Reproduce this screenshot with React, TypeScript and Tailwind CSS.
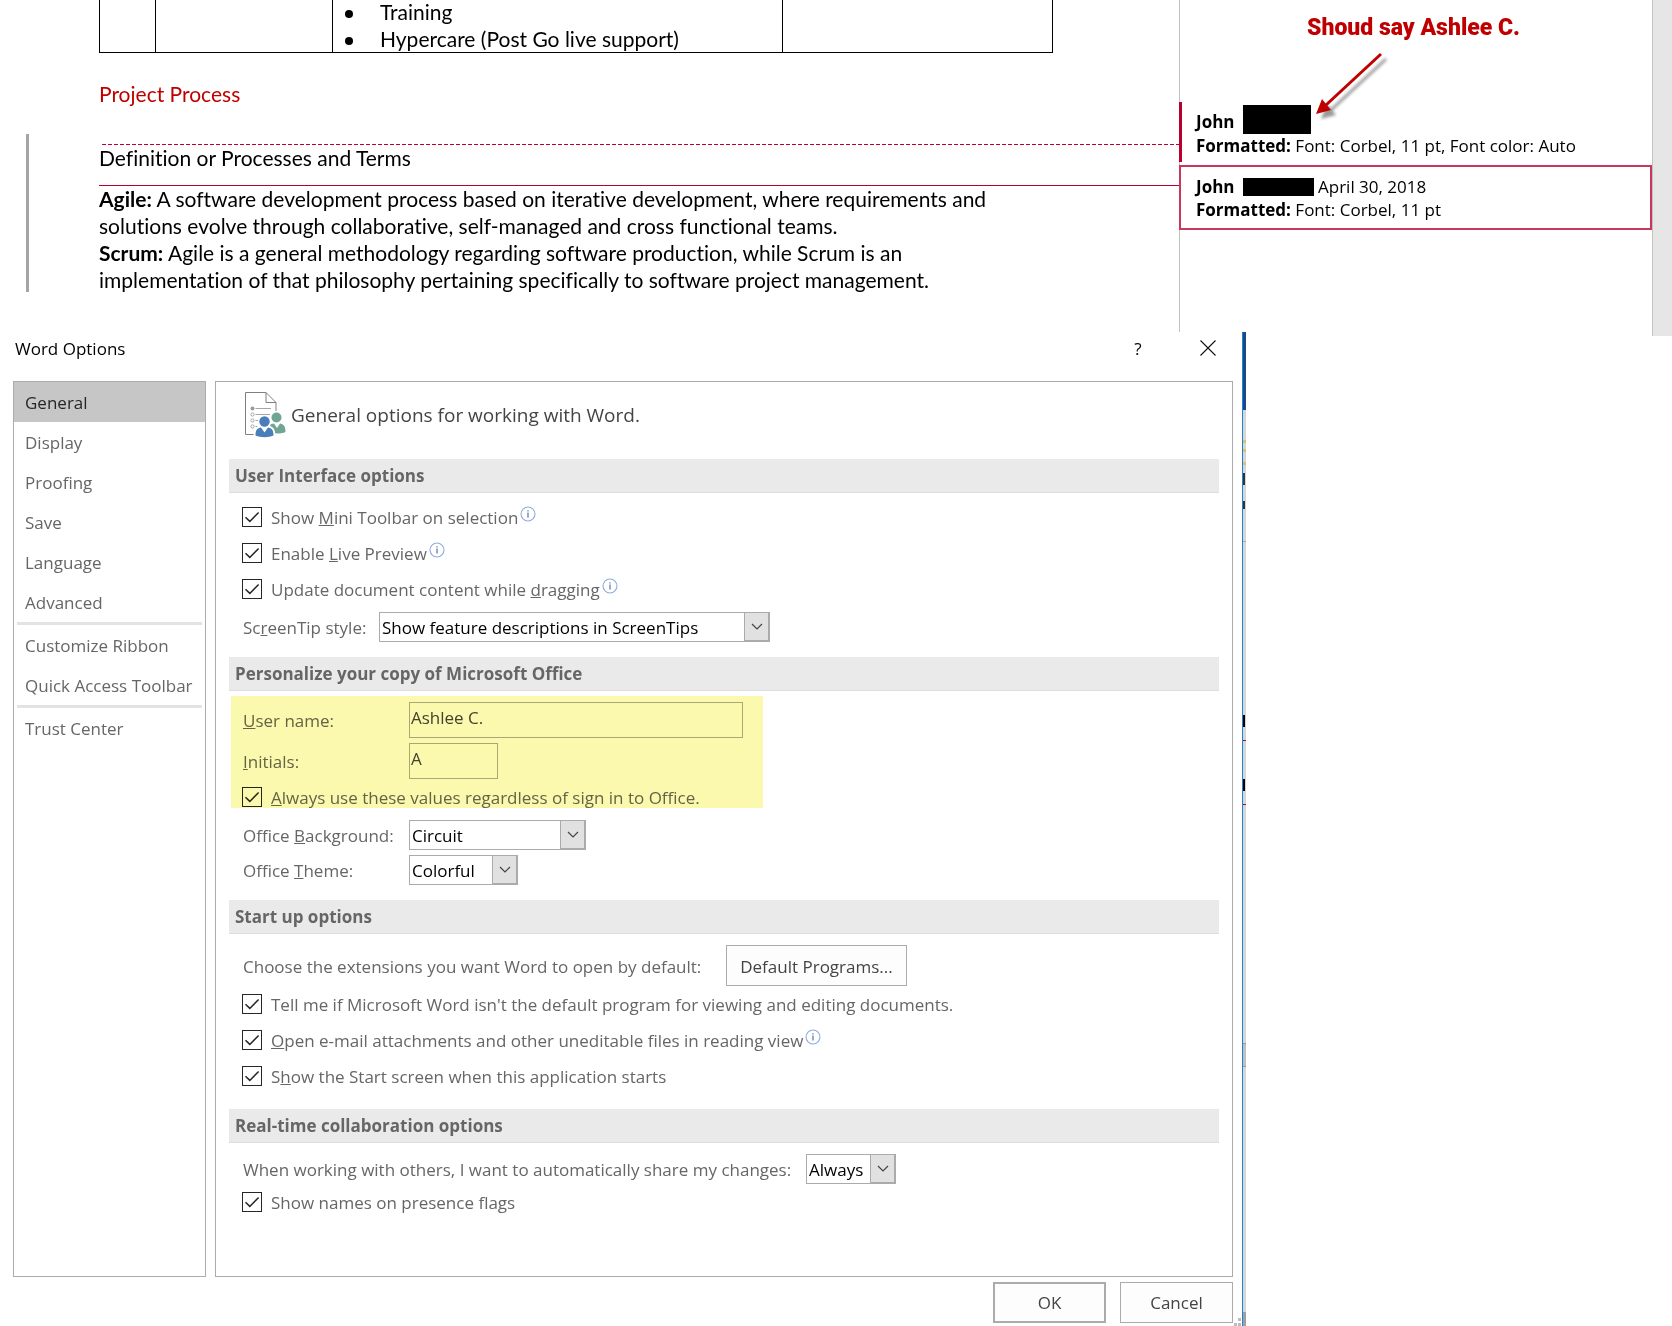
import React, { useState } from "react";

interface CheckRowProps {
  id: string;
  children: React.ReactNode;
  info?: boolean;
}

interface DropdownProps {
  id: string;
  options: string[];
  className: string;
}

interface NavItem {
  label: string;
  divider?: boolean;
}

const NAV_ITEMS: NavItem[] = [
  { label: "General" },
  { label: "Display" },
  { label: "Proofing" },
  { label: "Save" },
  { label: "Language" },
  { label: "Advanced" },
  { label: "Customize Ribbon", divider: true },
  { label: "Quick Access Toolbar" },
  { label: "Trust Center", divider: true },
];

const TABLE_ITEMS = ["Training", "Hypercare (Post Go live support)"];

function InfoIcon() {
  return (
    <svg className="mb-1.5 ml-0.5 h-4 w-4 shrink-0" viewBox="0 0 16 16" fill="none" aria-hidden="true">
      <circle cx="8" cy="8" r="7" stroke="#8faadc" strokeWidth="1.1" />
      <path d="M8 6.6V11.4" stroke="#5b6fa8" strokeWidth="1.2" />
      <path d="M8 4.2V5.5" stroke="#5b6fa8" strokeWidth="1.2" />
    </svg>
  );
}

function CheckRow({ id, children, info }: CheckRowProps) {
  return (
    <div className="flex h-9 items-center pl-[13px]">
      <span className="relative h-5 w-5 shrink-0">
        <input
          id={id}
          type="checkbox"
          defaultChecked
          className="peer block h-5 w-5 appearance-none border border-[#262626] bg-white"
        />
        <svg
          className="pointer-events-none absolute inset-0 hidden h-5 w-5 peer-checked:block"
          viewBox="0 0 20 20"
          fill="none"
          aria-hidden="true"
        >
          <path d="M3.5 10.2L7.8 14.4L16.6 5.4" stroke="#262626" strokeWidth="1.5" />
        </svg>
      </span>
      <label htmlFor={id} className="pt-0.5 pl-[9px] whitespace-nowrap">
        {children}
      </label>
      {info && <InfoIcon />}
    </div>
  );
}

function Dropdown({ id, options, className }: DropdownProps) {
  return (
    <span className={"relative inline-block h-[30px] " + className}>
      <select
        id={id}
        className="h-full w-full appearance-none border border-[#ababab] bg-white pt-0.5 pr-[26px] pl-0.5 text-black"
      >
        {options.map((o) => (
          <option key={o}>{o}</option>
        ))}
      </select>
      <span className="pointer-events-none absolute inset-y-0 right-0 flex w-[26px] items-center justify-center border border-r-2 border-b-2 border-[#ababab] bg-[#e1e1e1]">
        <svg className="h-[7px] w-3" viewBox="0 0 12 7" fill="none" aria-hidden="true">
          <path d="M1 1L6 6L11 1" stroke="#444444" strokeWidth="1.2" />
        </svg>
      </span>
    </span>
  );
}

function SectionTitle({ children }: { children: React.ReactNode }) {
  return (
    <h2 className="flex h-[34px] items-center border-b border-[#dedede] bg-[#eaeaea] pl-1.5 font-bold text-[#666666]">
      {children}
    </h2>
  );
}

function GeneralIcon() {
  return (
    <svg className="h-[46px] w-[41px]" viewBox="0 0 41 46" fill="none" aria-hidden="true">
      <path d="M10 42.5H0.5V0.5H21L31 10.5V19" stroke="#7f7f7f" />
      <path d="M21 0.5V10.5H31" stroke="#7f7f7f" />
      <circle cx="7.5" cy="16.5" r="2" fill="#9a9a9a" />
      <circle cx="7.5" cy="22.5" r="1.6" stroke="#a6a6a6" />
      <circle cx="7.5" cy="28.5" r="1.6" stroke="#a6a6a6" />
      <circle cx="7.5" cy="34.5" r="1.6" stroke="#a6a6a6" />
      <path d="M10.5 16.5H26M10.5 22.5H25M10.5 28.5H13M10.5 34.5H12.5" stroke="#a6a6a6" />
      <circle cx="31.5" cy="25.5" r="5" fill="#70a593" />
      <path d="M25 33C27 31.6 29 31.6 29 31.6L32 36L35 31.6C38.5 32.4 40.5 34 40.5 40C37 41.8 31 41.8 27.5 40.8Z" fill="#70a593" />
      <circle cx="19.5" cy="29.5" r="6.2" fill="#ffffff" />
      <circle cx="19.5" cy="29.5" r="5.2" fill="#4a7ebb" />
      <path
        d="M9.5 44C9.5 37 12.5 34.8 16 34.8L19.5 40L23 34.8C26.5 34.8 29.5 37 29.5 44C24 46.5 15 46.5 9.5 44Z"
        fill="#ffffff"
        stroke="#ffffff"
        strokeWidth="2"
      />
      <path
        d="M10.5 43.5C10.5 38 12.5 36 16 35.6L19.5 40.5L23 35.6C26.5 36 28.5 38 28.5 43.5C23.5 45.8 15.5 45.8 10.5 43.5Z"
        fill="#4a7ebb"
      />
    </svg>
  );
}

function DocumentPage() {
  return (
    <main className="min-w-0 flex-1 font-['Lato',sans-serif] text-[21px] leading-[27px] text-black [font-variant-ligatures:none]">
      <table className="-mt-0.5 ml-[99px] w-[954px] table-fixed border-collapse">
        <tbody>
          <tr>
            <td className="w-14 border border-t-0 border-black" />
            <td className="w-[177px] border border-t-0 border-black" />
            <td className="w-[450px] border border-t-0 border-black p-0">
              <ul className="pl-3">
                {TABLE_ITEMS.map((item) => (
                  <li key={item} className="flex items-center gap-[27px]">
                    <span className="mt-1 h-2 w-2 rounded-full bg-black" />
                    {item}
                  </li>
                ))}
              </ul>
            </td>
            <td className="border border-t-0 border-black" />
          </tr>
        </tbody>
      </table>

      <h1 className="mt-[27px] ml-[99px] text-[#c00000]">Project Process</h1>

      {/* Revised block, flagged by the change bar in the margin */}
      <div className="mt-[27px] ml-[26px] h-[158px] border-l-[3px] border-[#a5a5a5] pt-2.5">
        <div className="ml-[73px] h-px bg-[repeating-linear-gradient(90deg,#c00030_0_4px,transparent_4px_6px)]" />
        <p className="-mt-px ml-[70px]">Definition or Processes and Terms</p>
        <div className="mt-3.5 ml-[70px] h-px bg-[#b8002e]" />
        <p className="-mt-px ml-[70px]">
          <b>Agile:</b> A software development process based on iterative development, where requirements and
          <br />
          solutions evolve through collaborative, self-managed and cross functional teams.
          <br />
          <b>Scrum:</b> Agile is a general methodology regarding software production, while Scrum is an
          <br />
          implementation of that philosophy pertaining specifically to software project management.
        </p>
      </div>
    </main>
  );
}

function Comments() {
  return (
    <aside className="relative w-[473px] border-l border-[#c3c3c3] text-[17px] leading-6 text-black">
      <p className="pt-4 pl-[127px] font-['Roboto',sans-serif] text-[23px] font-black text-[#c00000]">
        Shoud say Ashlee C.
      </p>
      <svg
        className="absolute top-[50px] left-[130px] h-[74px] w-[84px]"
        viewBox="0 0 84 74"
        fill="none"
        aria-hidden="true"
      >
        <defs>
          <filter id="soft" x="-20%" y="-20%" width="140%" height="140%">
            <feGaussianBlur stdDeviation="1.5" />
          </filter>
        </defs>
        <g filter="url(#soft)" transform="translate(5 5)" opacity="0.4">
          <path d="M71 4L16 55" stroke="#000000" strokeWidth="3" />
          <path d="M6 64L12 49L21 60Z" fill="#000000" />
        </g>
        <path d="M71 4L16 55" stroke="#c00000" strokeWidth="3" />
        <path d="M6 64L12 49L21 60Z" fill="#c00000" />
      </svg>

      <div className="mt-[62px] -ml-px h-[60px] border-l-[3px] border-[#b8002e] pt-[3px] pl-3.5">
        <div className="flex h-[29px] items-center">
          <b className="w-[47px] pt-1">John</b>
          <span className="h-[29px] w-[68px] bg-black" />
        </div>
        <p>
          <b>Formatted:</b> Font: Corbel, 11 pt, Font color: Auto
        </p>
      </div>
      <div className="mt-[3px] -ml-px h-[65px] border-2 border-[#c8385c] pt-2 pl-[15px]">
        <div className="flex h-[23px] items-center">
          <b className="w-[47px]">John</b>
          <span className="mr-1 h-[18px] w-[71px] bg-black" />
          April 30, 2018
        </div>
        <p>
          <b>Formatted:</b> Font: Corbel, 11 pt
        </p>
      </div>
    </aside>
  );
}

// The sliver of the Word window that shows behind the dialog's right edge
function WindowEdge() {
  return (
    <div className="flex w-1 flex-col overflow-hidden border-l border-[#1a85d6] bg-[#d6d6d6]" aria-hidden="true">
      <div className="h-[78px] bg-[#194a86]" />
      <div className="mt-[30px] h-[3px] bg-[#e3bd6a]" />
      <div className="mt-1.5 h-[3px] bg-[#e3bd6a]" />
      <div className="mt-2.5 h-[3px] bg-[#e3bd6a]" />
      <div className="mt-2 h-3 w-0.5 bg-[#333333]" />
      <div className="mt-4 h-2 w-0.5 bg-[#333333]" />
      <div className="mt-8 h-px bg-[#aaaaaa]" />
      <div className="mt-[173px] h-3 w-0.5 bg-black" />
      <div className="mt-[13px] h-px bg-[#b8002e]" />
      <div className="mt-[38px] h-3 w-0.5 bg-black" />
      <div className="mt-[13px] h-px bg-[#b8002e]" />
      <div className="mt-[238px] h-6 border-y border-[#9a9a9a] bg-[#c0c0c0]" />
      <div className="mt-auto h-3.5 bg-[#a0a0a0]" />
    </div>
  );
}

function OptionsDialog() {
  const [active, setActive] = useState("General");

  return (
    <div role="dialog" aria-label="Word Options" className="flex w-full max-w-[1246px] flex-1">
      <div className="relative flex min-w-0 flex-1 flex-col pr-[9px] pb-[3px] pl-[13px]">
        <header className="flex h-[49px] items-start pt-1 text-black">
          <h1 className="pl-0.5 leading-[26px]">Word Options</h1>
          <button type="button" aria-label="Help" className="ml-auto w-4 leading-[26px]">
            ?
          </button>
          <button type="button" aria-label="Close" className="mt-1 mr-[17px] ml-[54px]">
            <svg className="h-4 w-4" viewBox="0 0 16 16" fill="none" aria-hidden="true">
              <path d="M0.5 0.5L15.5 15.5M15.5 0.5L0.5 15.5" stroke="#111111" strokeWidth="1.1" />
            </svg>
          </button>
        </header>

        <div className="flex flex-1 gap-[9px]">
          <nav className="flex w-[193px] flex-col border border-[#ababab]">
            {NAV_ITEMS.map(({ label, divider }) => (
              <React.Fragment key={label}>
                {divider && <div className="mx-[3px] h-[3px] shrink-0 bg-[#e3e3e3]" />}
                <button
                  type="button"
                  onClick={() => setActive(label)}
                  className={
                    active === label
                      ? "h-10 bg-[#c6c6c6] pt-0.5 pl-[11px] text-left whitespace-nowrap text-[#262626]"
                      : "h-10 pt-0.5 pl-[11px] text-left whitespace-nowrap"
                  }
                >
                  {label}
                </button>
              </React.Fragment>
            ))}
          </nav>

          <section className="min-w-0 flex-1 border border-[#ababab] pr-[13px] pl-[13px]">
            <div className="flex h-[77px] items-start gap-[5px] pt-2.5 pl-4 text-[19px] text-[#444444]">
              <GeneralIcon />
              <p className="pt-[9px]">General options for working with Word.</p>
            </div>

            <SectionTitle>User Interface options</SectionTitle>
            <div className="pt-1.5 pb-2.5">
              <CheckRow id="mini-toolbar" info>
                Show <u>M</u>ini Toolbar on selection
              </CheckRow>
              <CheckRow id="live-preview" info>
                Enable <u>L</u>ive Preview
              </CheckRow>
              <CheckRow id="update-drag" info>
                Update document content while <u>d</u>ragging
              </CheckRow>
              <div className="flex h-10 items-center pl-3.5">
                <label htmlFor="screentip" className="w-[136px] pt-0.5">
                  Sc<u>r</u>eenTip style:
                </label>
                <Dropdown
                  id="screentip"
                  className="w-[391px]"
                  options={[
                    "Show feature descriptions in ScreenTips",
                    "Don't show feature descriptions in ScreenTips",
                    "Don't show ScreenTips",
                  ]}
                />
              </div>
            </div>

            <SectionTitle>Personalize your copy of Microsoft Office</SectionTitle>
            <div className="relative pt-[11px] pb-[15px]">
              <div className="flex h-9 items-center pl-3.5">
                <label htmlFor="user-name" className="w-[166px] pt-0.5">
                  <u>U</u>ser name:
                </label>
                <input
                  id="user-name"
                  defaultValue="Ashlee C."
                  className="h-9 w-[334px] border border-[#ababab] bg-white pb-1.5 pl-px text-[#444444]"
                />
              </div>
              <div className="mt-[5px] flex h-9 items-center pl-3.5">
                <label htmlFor="initials" className="w-[166px] pt-0.5">
                  <u>I</u>nitials:
                </label>
                <input
                  id="initials"
                  defaultValue="A"
                  className="h-9 w-[89px] border border-[#ababab] bg-white pb-1.5 pl-px text-[#444444]"
                />
              </div>
              <CheckRow id="always-use">
                <u>A</u>lways use these values regardless of sign in to Office.
              </CheckRow>
              {/* Yellow marker */}
              <div className="pointer-events-none absolute top-[5px] left-0.5 h-28 w-[532px] bg-[#fbf9ae] mix-blend-multiply" />
              <div className="mt-[5px] flex items-center pl-3.5">
                <label htmlFor="background" className="w-[166px] pt-0.5">
                  Office <u>B</u>ackground:
                </label>
                <Dropdown id="background" className="w-[177px]" options={["Circuit", "Clouds", "No Background"]} />
              </div>
              <div className="mt-[5px] flex items-center pl-3.5">
                <label htmlFor="theme" className="w-[166px] pt-0.5">
                  Office <u>T</u>heme:
                </label>
                <Dropdown id="theme" className="w-[109px]" options={["Colorful", "Dark Gray", "White"]} />
              </div>
            </div>

            <SectionTitle>Start up options</SectionTitle>
            <div className="pt-[11px] pb-[15px]">
              <div className="flex items-center pl-3.5">
                <span className="w-[483px] pt-0.5">Choose the extensions you want Word to open by default:</span>
                <button
                  type="button"
                  className="h-[41px] w-[181px] border border-[#ababab] bg-[#fdfdfd] pt-0.5 text-[#444444]"
                >
                  Default Programs...
                </button>
              </div>
              <CheckRow id="tell-default">
                Tell me if Microsoft Word isn't the default program for viewing and editing documents.
              </CheckRow>
              <CheckRow id="reading-view" info>
                <u>O</u>pen e-mail attachments and other uneditable files in reading view
              </CheckRow>
              <CheckRow id="start-screen">
                S<u>h</u>ow the Start screen when this application starts
              </CheckRow>
            </div>

            <SectionTitle>Real-time collaboration options</SectionTitle>
            <div className="pt-[11px]">
              <div className="flex items-center pl-3.5">
                <label htmlFor="share" className="w-[563px] pt-0.5">
                  When working with others, I want to automatically share my changes:
                </label>
                <Dropdown id="share" className="w-[90px]" options={["Always", "Ask me", "Never"]} />
              </div>
              <CheckRow id="presence">Show names on presence flags</CheckRow>
            </div>
          </section>
        </div>

        <footer className="mt-[5px] flex justify-end gap-3.5 text-[#444444]">
          <button type="button" className="h-[41px] w-[113px] border-2 border-[#ababab] bg-[#fdfdfd]">
            OK
          </button>
          <button type="button" className="h-[41px] w-[113px] border border-[#ababab] bg-[#fdfdfd]">
            Cancel
          </button>
        </footer>
        {/* Resize grip */}
        <svg className="absolute right-0 bottom-0 h-2 w-2" viewBox="0 0 8 8" aria-hidden="true">
          <path d="M4 0H7V3H4ZM4 5H7V8H4ZM0 5H3V8H0Z" fill="#bdbdbd" />
        </svg>
      </div>
      <WindowEdge />
    </div>
  );
}

function App() {
  return (
    <div className="flex min-h-screen flex-col bg-white font-['Open_Sans',sans-serif] text-[17px] text-[#666666]">
      <div className="flex min-h-[332px]">
        <DocumentPage />
        <Comments />
        <div className="-mb-1 w-5 border-l border-[#c3c3c3] bg-[#e6e6e6]" />
      </div>
      <OptionsDialog />
    </div>
  );
}

export default App;
